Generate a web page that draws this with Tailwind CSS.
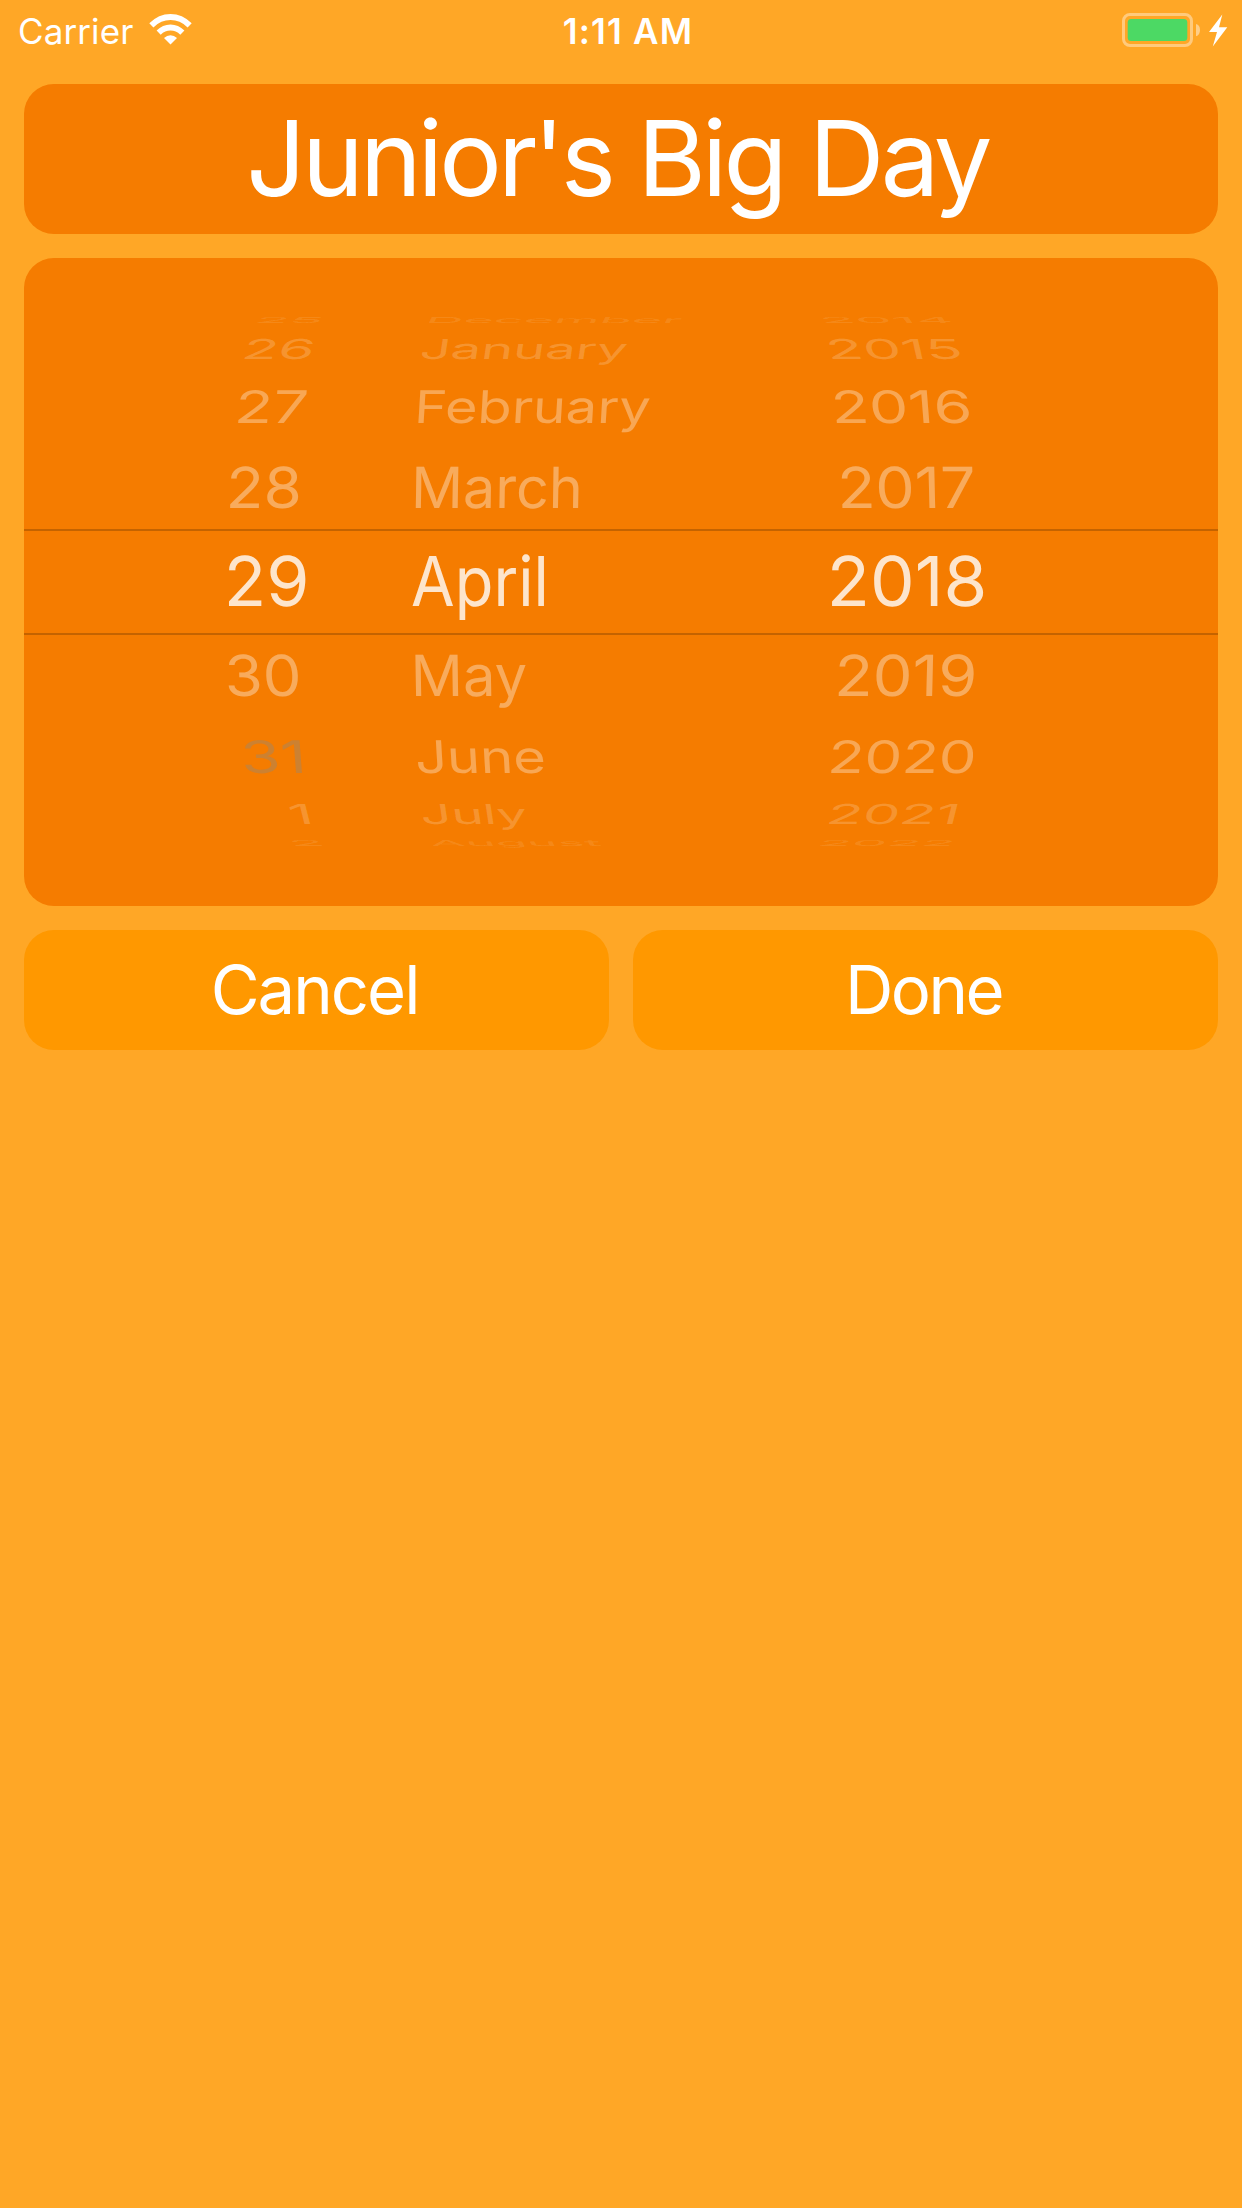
<!DOCTYPE html>
<html lang="en">
<head>
<meta charset="utf-8">
<title>Junior's Big Day</title>
<script src="https://cdn.jsdelivr.net/npm/@tailwindcss/browser@4"></script>
</head>
<body class="flex h-[2208px] w-[1242px] flex-col overflow-hidden bg-[#ffa726] font-['Inter',sans-serif] text-white">
  <header class="grid h-[60px] shrink-0 grid-cols-3 items-center pl-[18px] pr-[14px] pt-[3px] text-[35px] leading-none">
    <div class="flex items-center gap-[16px]">
      <span class="tracking-[0.1px]">Carrier</span>
      <svg class="-mt-[4px] h-[31px] w-[43px]" viewBox="0 0 43 31" fill="white">
        <path d="M0.3 9.3Q9.6 0 21.5 0T42.7 9.3L38.6 13.4Q31 6.1 21.5 6.1T4.4 13.4Z"/>
        <path d="M7.6 16.6Q13.6 10.6 21.5 10.6T35.4 16.6L31.3 20.7Q27 16.6 21.5 16.6T11.7 20.7Z"/>
        <path d="M15 24Q18 21.2 21.5 21.2T28 24L21.5 30.4Z"/>
      </svg>
    </div>
    <span class="pl-[10px] text-center font-semibold tracking-[1.2px]">1:11 AM</span>
    <svg class="-mt-[3px] h-[36px] w-[107px] justify-self-end" viewBox="1121 12 107 36">
      <rect x="1123.5" y="14.5" width="68" height="31" rx="6.5" fill="none" stroke="white" stroke-opacity=".4" stroke-width="3"/>
      <rect x="1127.7" y="19" width="59.6" height="22" rx="3.5" fill="#4cd964"/>
      <path d="M1196 24Q1200 25 1200 30T1196 36.3Z" fill="white" fill-opacity=".45"/>
      <path d="M1222.3 14.5L1209 32H1217L1212.8 46.5L1227.3 27.3H1219Z" fill="white"/>
    </svg>
  </header>

  <main class="flex flex-col gap-6 px-6 pt-6">
    <h1 class="flex h-[150px] items-center justify-center rounded-[30px] bg-[#f57c00] pb-[2px] pr-[7px] text-[104.5px] leading-none tracking-[-3.9px]">Junior's Big Day</h1>

    <section class="relative h-[648px] overflow-hidden rounded-[30px] bg-[#f57c00]">
      <div class="absolute inset-x-0 top-[271px] h-[106px] border-y-2 border-black/20"></div>
      <svg id="wheel" class="absolute inset-0 h-[648px] w-[1194px]" viewBox="24 258 1194 648" font-size="69" text-rendering="geometricPrecision"></svg>
    </section>

    <div class="grid grid-cols-2 gap-6 text-[67px] leading-none">
      <button class="flex h-[120px] items-center justify-center rounded-[30px] bg-[#ff9800] pb-px pr-[4px] tracking-[-2px]">Cancel</button>
      <button class="flex h-[120px] items-center justify-center rounded-[30px] bg-[#ff9800] pb-px pr-[4px] tracking-[-2.6px]">Done</button>
    </div>
  </main>

<script>
// Each wheel row: baseline, cap height, opacity, then [label, left, right, lean] per column.
const rows = [
  [323, 6, .11, ['25', 257, 321.5, .8], ['December', 429, 682, .5], ['2014', 823, 952, -.7]],
  [359, 20, .2, ['26', 244.5, 313, .28], ['January', 421, 627, .15], ['2015', 829.5, 961, -.23]],
  [423, 32.7, .33, ['27', 238, 306, .09], ['February', 418.3, 649.7, .06], ['2016', 835, 970, -.08]],
  [508.3, 41.3, .36, ['28', 230, 299, .03], ['March', 415.7, 579, .015], ['2017', 841.5, 973.5, -.025]],
  [606, 50, .8, ['29', 228.7, 305.5, 0], ['April', 412, 544.5, 0], ['2018', 832, 983.5, 0]],
  [696.3, 41.3, .36, ['30', 228, 299, -.03], ['May', 415.7, 526, -.015], ['2019', 838.5, 974, .025]],
  [773, 32.7, .33, ['31', 244, 302, -.075, '#8a8a82'], ['June', 417, 544, -.06], ['2020', 831, 974, .08]],
  [824.3, 20, .2, ['1', 290, 310, -.25], ['July', 422, 527, -.15], ['2021', 829, 956, .25]],
  [845.7, 6, .11, ['2', 292, 323, -.8], ['August', 430, 602, -.5], ['2022', 820, 953, .7]],
];
const ctx = document.createElement('canvas').getContext('2d');
ctx.font = '69px Inter';
const wheel = document.getElementById('wheel');
for (const [base, cap, alpha, ...cells] of rows) {
  for (const [label, left, right, lean, color] of cells) {
    const m = ctx.measureText(label);
    const ink = m.actualBoundingBoxRight + m.actualBoundingBoxLeft;
    const shift = Math.abs(lean) * cap * .7;
    const sx = (right - left - shift) / ink;
    const sy = cap / 50.2;
    const x = left + (lean < 0 ? shift : 0) + m.actualBoundingBoxLeft * sx;
    const t = document.createElementNS('http://www.w3.org/2000/svg', 'text');
    t.textContent = label;
    t.setAttribute('fill', color || 'white');
    t.setAttribute('fill-opacity', color ? .38 : alpha);
    t.setAttribute('transform', `matrix(${sx} 0 ${-lean * sy} ${sy} ${x} ${base})`);
    wheel.appendChild(t);
  }
}
</script>
</body>
</html>
